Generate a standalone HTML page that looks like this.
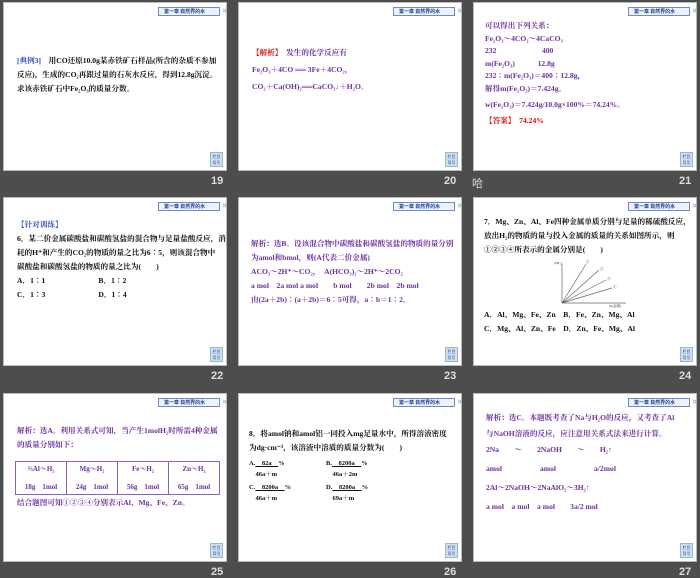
<!DOCTYPE html>
<html><head><meta charset="utf-8"><style>
*{margin:0;padding:0;box-sizing:border-box}
body{width:700px;height:578px;background:#4d4d4d;position:relative;overflow:hidden;font-family:"Liberation Serif","Noto Serif CJK SC","Noto Sans CJK SC",serif;}
.s{position:absolute;width:224px;height:169px;background:#fff;border:1px solid #bbb;}
.hd{position:absolute;right:6px;top:4px;width:62px;height:9px;background:#eef3fb;border:1px solid #6a8cc8;font-size:5px;color:#1f3f8f;line-height:7px;padding-left:5px;font-weight:bold;font-family:"Noto Sans CJK SC",sans-serif;white-space:nowrap}
.hd:after{content:"»";position:absolute;right:-8px;top:-2px;font-size:9px;color:#9ab;}
.ic{position:absolute;right:3px;bottom:3px;width:13px;height:15px;background:#cfdff3;border:1px solid #9bb;font-size:4px;line-height:6px;color:#2850a0;text-align:center;padding-top:1px;font-family:"Noto Sans CJK SC",sans-serif}
.n{position:absolute;color:#ddd;font-size:11px;font-weight:bold;font-family:"Liberation Sans",sans-serif}
.t{position:absolute;font-size:7.6px;line-height:14px;white-space:nowrap;font-weight:bold}
.p{color:#7030a0}.k{color:#111}.r{color:#e00000}
</style></head><body>

<!-- 19 -->
<div class="s" style="left:3px;top:2px"><div class="hd">第一章 自然界的水</div><div class="ic">栏目<br>导引</div>
<div class="t k" style="left:13px;top:51px"><span style="color:#3050c0">[典例3]</span>　用CO还原10.0g某赤铁矿石样品(所含的杂质不参加<br>反应)，生成的CO₂再跟过量的石灰水反应，得到12.8g沉淀。<br>求该赤铁矿石中Fe₂O₃的质量分数。</div></div>
<div class="n" style="left:211px;top:175px">19</div>

<!-- 20 -->
<div class="s" style="left:238px;top:2px"><div class="hd">第一章 自然界的水</div><div class="ic">栏目<br>导引</div>
<div class="t p" style="left:13px;top:43px"><span class="r">【解析】</span>　发生的化学反应有<br><span style="line-height:20px">Fe₂O₃＋4CO ══ 3Fe＋4CO₂，</span><br>CO₂＋Ca(OH)₂══CaCO₃↓＋H₂O。</div></div>
<div class="n" style="left:444px;top:175px">20</div>

<!-- 21 -->
<div class="s" style="left:473px;top:2px"><div class="hd">第一章 自然界的水</div><div class="ic">栏目<br>导引</div>
<div class="t p" style="left:11px;top:17px;line-height:12.5px">可以得出下列关系：<br>Fe₂O₃～4CO₂～4CaCO₃<br>232　　　　　　400<br>m(Fe₂O₃)　　　12.8g<br>232∶m(Fe₂O₃)＝400∶12.8g，<br>解得m(Fe₂O₃)＝7.424g。<br><span style="line-height:20px">w(Fe₂O₃)＝7.424g/10.0g×100%＝74.24%。</span><br><span class="r">【答案】　74.24%</span></div></div>
<div class="n" style="left:679px;top:175px">21</div>
<div class="n" style="left:472px;top:175px;font-weight:normal;font-family:'Noto Sans CJK SC'">哈</div>

<!-- 22 -->
<div class="s" style="left:3px;top:197px"><div class="hd">第一章 自然界的水</div><div class="ic">栏目<br>导引</div>
<div class="t k" style="left:13px;top:20px"><span style="color:#3050c0">【针对训练】</span><br>6．某二价金属碳酸盐和碳酸氢盐的混合物与足量盐酸反应，消<br>耗的H⁺和产生的CO₂的物质的量之比为6∶5，则该混合物中<br>碳酸盐和碳酸氢盐的物质的量之比为(　　)<br>A．1∶1　　　　　　　B．1∶2<br>C．1∶3　　　　　　　D．1∶4</div></div>
<div class="n" style="left:211px;top:370px">22</div>

<!-- 23 -->
<div class="s" style="left:238px;top:197px"><div class="hd">第一章 自然界的水</div><div class="ic">栏目<br>导引</div>
<div class="t p" style="left:12px;top:39px">解析：选B。设该混合物中碳酸盐和碳酸氢盐的物质的量分别<br>为amol和bmol，则(A代表二价金属)<br>ACO₃～2H⁺～CO₂，　A(HCO₃)₂～2H⁺～2CO₂<br>a mol　2a mol a mol　　b mol　　2b mol　2b mol<br>由(2a＋2b)∶(a＋2b)＝6∶5可得，a∶b＝1∶2。</div></div>
<div class="n" style="left:444px;top:370px">23</div>

<!-- 24 -->
<div class="s" style="left:473px;top:197px"><div class="hd">第一章 自然界的水</div><div class="ic">栏目<br>导引</div>
<div class="t k" style="left:10px;top:17px">7．Mg、Zn、Al、Fe四种金属单质分别与足量的稀硫酸反应，<br>放出H₂的物质的量与投入金属的质量的关系如图所示，则<br>①②③④所表示的金属分别是(　　)</div>
<svg style="position:absolute;left:80px;top:60px" width="80" height="50" viewBox="0 0 80 50"><g stroke="#666" stroke-width="0.7" fill="none"><path d="M8 45V6M8 45H72M8 45L32 6M8 45L45 12M8 45L52 22M8 45L58 30"/></g><g font-size="3.5" fill="#333"><text x="0" y="6">n(H₂)</text><text x="55" y="49">m(金属)</text><text x="32" y="5">①</text><text x="46" y="12">②</text><text x="53" y="22">③</text><text x="59" y="30">④</text></g></svg>
<div class="t k" style="left:10px;top:110px">A．Al、Mg、Fe、Zn　B．Fe、Zn、Mg、Al<br>C．Mg、Al、Zn、Fe　D．Zn、Fe、Mg、Al</div></div>
<div class="n" style="left:679px;top:370px">24</div>

<!-- 25 -->
<div class="s" style="left:3px;top:393px"><div class="hd">第一章 自然界的水</div><div class="ic">栏目<br>导引</div>
<div class="t p" style="left:13px;top:30px">解析：选A。利用关系式可知，当产生1molH₂时所需4种金属<br>的质量分别如下：</div>
<table style="position:absolute;left:11px;top:67px;width:205px;height:34px;border-collapse:collapse;font-size:7px;color:#7030a0;font-weight:bold;text-align:center"><tr><td style="border:1.5px solid #9060c0">⅔Al～H₂<br><br>18g　1mol</td><td style="border:1.5px solid #9060c0">Mg～H₂<br><br>24g　1mol</td><td style="border:1.5px solid #9060c0">Fe～H₂<br><br>56g　1mol</td><td style="border:1.5px solid #9060c0">Zn～H₂<br><br>65g　1mol</td></tr></table>
<div class="t p" style="left:13px;top:102px">结合题图可知①②③④分别表示Al、Mg、Fe、Zn。</div></div>
<div class="n" style="left:211px;top:566px">25</div>

<!-- 26 -->
<div class="s" style="left:238px;top:393px"><div class="hd">第一章 自然界的水</div><div class="ic">栏目<br>导引</div>
<div class="t k" style="left:10px;top:33px">8．将amol钠和amol铝一同投入mg足量水中，所得溶液密度<br>为dg·cm⁻³，该溶液中溶质的质量分数为(　　)</div>
<div class="t k" style="left:10px;top:64px;line-height:11px;font-size:6.5px">A.<u>　82a　</u>%<br>　46a＋m</div>
<div class="t k" style="left:87px;top:64px;line-height:11px;font-size:6.5px">B.<u>　8200a　</u>%<br>　46a＋2m</div>
<div class="t k" style="left:10px;top:88px;line-height:11px;font-size:6.5px">C.<u>　8200a　</u>%<br>　46a＋m</div>
<div class="t k" style="left:87px;top:88px;line-height:11px;font-size:6.5px">D.<u>　8200a　</u>%<br>　69a＋m</div></div>
<div class="n" style="left:444px;top:566px">26</div>

<!-- 27 -->
<div class="s" style="left:473px;top:393px"><div class="hd">第一章 自然界的水</div><div class="ic">栏目<br>导引</div>
<div class="t p" style="left:12px;top:16px;line-height:16px">解析：选C。本题既考查了Na与H₂O的反应，又考查了Al<br>与NaOH溶液的反应，应注意用关系式法来进行计算。<br>2Na　　～　　2NaOH　　～　　H₂↑<br><span style="line-height:22px">amol　　　　　amol　　　　　a/2mol</span><br>2Al～2NaOH～2NaAlO₂～3H₂↑<br><span style="line-height:22px">a mol　a mol　a mol　　3a/2 mol</span></div></div>
<div class="n" style="left:679px;top:566px">27</div>
</body></html>
